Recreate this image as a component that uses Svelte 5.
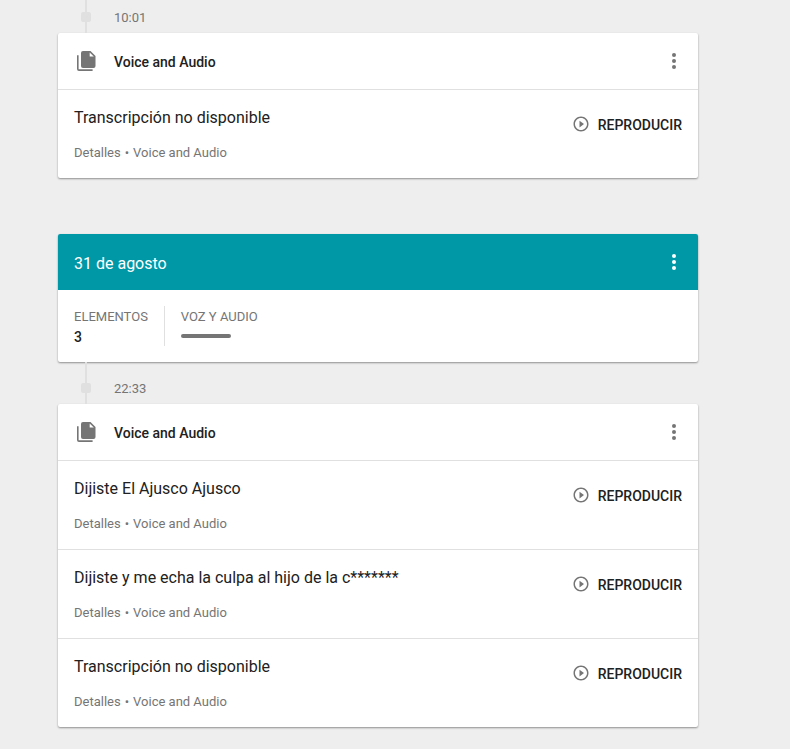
<script>
  const groups = [
    { time: '10:01', entries: ['Transcripción no disponible'] },
    {
      time: '22:33',
      day: { date: '31 de agosto', count: 3 },
      entries: [
        'Dijiste El Ajusco Ajusco',
        'Dijiste y me echa la culpa al hijo de la c*******',
        'Transcripción no disponible'
      ]
    }
  ];
</script>

{#snippet menu(label)}
  <button class="menu" type="button" aria-label={label}>
    <svg viewBox="0 0 24 24" width="24" height="24" aria-hidden="true">
      <circle cx="12" cy="6" r="2" />
      <circle cx="12" cy="12" r="2" />
      <circle cx="12" cy="18" r="2" />
    </svg>
  </button>
{/snippet}

<main>
  {#each groups as group}
    {#if group.day}
      <section class="card day">
        <header class="bar date">
          <h2>{group.day.date}</h2>
          {@render menu('Opciones del día')}
        </header>
        <div class="stats">
          <div class="stat">
            <span>ELEMENTOS</span>
            <strong>{group.day.count}</strong>
          </div>
          <div class="stat">
            <span>VOZ Y AUDIO</span>
            <i class="meter"></i>
          </div>
        </div>
      </section>
    {/if}
    <div class="moment" class:first={!group.day}>
      <span class="rail"><i></i></span>
      <time>{group.time}</time>
    </div>
    <section class="card">
      <header class="bar">
        <svg class="files" viewBox="0 0 24 24" width="24" height="24" aria-hidden="true">
          <path d="M9 2h7.500l5 5V17a2 2 0 0 1-2 2H9a2 2 0 0 1-2-2V4a2 2 0 0 1 2-2z" />
          <path class="fold" d="M15.700 3.500v4.100h4.100z" />
          <path d="M3 6.200h1.600v14h14V22H5a2 2 0 0 1-2-2z" />
        </svg>
        <h3>Voice and Audio</h3>
        {@render menu('Opciones')}
      </header>
      {#each group.entries as entry}
        <article>
          <div class="text">
            <p class="title">{entry}</p>
            <p class="meta"><a href="#detalles">Detalles</a><span>•</span>Voice and Audio</p>
          </div>
          <button class="play" type="button">
            <svg viewBox="0 0 24 24" width="18" height="18" aria-hidden="true">
              <path d="M10 16.500l6-4.500-6-4.500v9zM12 2C6.480 2 2 6.480 2 12s4.480 10 10 10 10-4.480 10-10S17.520 2 12 2zm0 18c-4.410 0-8-3.590-8-8s3.590-8 8-8 8 3.590 8 8-3.590 8-8 8z" />
            </svg>
            REPRODUCIR
          </button>
        </article>
      {/each}
    </section>
  {/each}
</main>

<style>
  :global(body) {
    margin: 0;
    background: #eee;
  }
  main {
    max-width: 640px;
    padding: 0 92px 22px 58px;
    font-family: Roboto, sans-serif;
    color: #212121;
  }
  h2, h3, p {
    margin: 0;
  }
  button {
    border: 0;
    padding: 0;
    background: none;
    font: inherit;
    color: inherit;
    cursor: pointer;
  }
  svg {
    display: block;
    flex: none;
    fill: #757575;
  }
  .card {
    background: #fff;
    border-radius: 2px;
    box-shadow: 0 1px 2px rgba(0, 0, 0, 0.4);
  }
  .day {
    margin-top: 56px;
  }
  .bar {
    display: flex;
    align-items: center;
    height: 56px;
    padding: 0 12px 0 16px;
  }
  .date {
    background: #0097a7;
    border-radius: 2px 2px 0 0;
    color: #fff;
  }
  .date svg {
    fill: #fff;
  }
  h2 {
    font-size: 16px;
    font-weight: 400;
    line-height: 24px;
    padding-top: 4px;
  }
  h3 {
    font-size: 14px;
    font-weight: 500;
    line-height: 20px;
    margin-left: 16px;
    padding-top: 2px;
  }
  .menu {
    margin-left: auto;
  }
  .files .fold {
    fill: #fff;
  }
  .stats {
    display: flex;
    padding: 16px 0;
  }
  .stat {
    display: flex;
    flex-direction: column;
    box-sizing: border-box;
    height: 40px;
    padding: 1px 16px 0;
    font-size: 13px;
    line-height: 20px;
    color: #757575;
  }
  .stat + .stat {
    border-left: 1px solid #e0e0e0;
  }
  .stat strong {
    font-size: 14px;
    font-weight: 500;
    color: #212121;
  }
  .meter {
    width: 50px;
    height: 4px;
    margin-top: 7px;
    border-radius: 2px;
    background: #757575;
  }
  .moment {
    display: flex;
    align-items: flex-end;
    height: 42px;
    font-size: 13px;
    line-height: 20px;
    color: #757575;
  }
  .first {
    height: 33px;
  }
  .moment time {
    margin-left: 27px;
    padding-bottom: 5px;
  }
  .rail {
    display: flex;
    align-items: flex-end;
    justify-content: center;
    align-self: stretch;
    width: 2px;
    margin-left: 27px;
    background: #e0e0e0;
  }
  .rail i {
    flex: none;
    width: 10px;
    height: 10px;
    margin-bottom: 11px;
    border-radius: 2px;
    background: #e0e0e0;
  }
  article {
    display: flex;
    align-items: flex-start;
    justify-content: space-between;
    padding: 16px 16px 15px;
    border-top: 1px solid #e0e0e0;
  }
  .title {
    font-size: 16px;
    line-height: 24px;
  }
  .meta {
    margin-top: 13px;
    font-size: 13px;
    line-height: 20px;
    color: #757575;
  }
  .meta a {
    color: inherit;
    text-decoration: none;
  }
  .meta span {
    margin: 0 4px;
  }
  .play {
    display: flex;
    align-items: flex-start;
    gap: 8px;
    margin-top: 9px;
    font-size: 14px;
    font-weight: 500;
    line-height: 20px;
  }
</style>
